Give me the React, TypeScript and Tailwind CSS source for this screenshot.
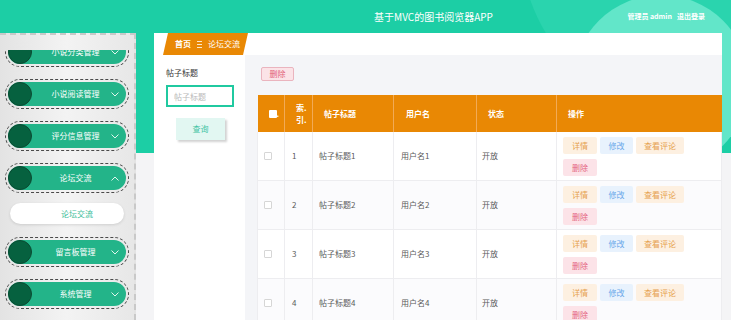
import React from "react";

function Chevron({ up }: { up?: boolean }) {
  return (
    <svg width="8" height="5" viewBox="0 0 8 5" className="shrink-0">
      <polyline
        points={up ? "0.5,4.5 4,1 7.5,4.5" : "0.5,0.5 4,4 7.5,0.5"}
        fill="none"
        stroke="#dff5ec"
        strokeWidth="1"
      />
    </svg>
  );
}

function MenuItem({ label, open, className }: { label: string; open?: boolean; className?: string }) {
  return (
    <div className={"mx-[5px] shrink-0 rounded-full border border-dashed border-[#4a4a4a] p-[2px] " + (className || "")}>
      <div className="flex h-[24px] items-center rounded-full bg-[#23b489] pr-[7px]">
        <div className="h-[24px] w-[24px] shrink-0 rounded-full border border-[#0b4a32] bg-[#06613f]" />
        <span className="flex-1 pl-[8px] text-center text-[8px] leading-none text-white">{label}</span>
        <Chevron up={open} />
      </div>
    </div>
  );
}

function Crumb() {
  return (
    <div className="flex h-[22px] items-center bg-white">
      <div className="ml-[9px] flex h-[22px] w-[85px] items-center bg-[#e98804] pl-[12px] text-[8px] font-bold text-white [clip-path:polygon(5px_0,100%_0,calc(100%-5px)_100%,0_100%)]">
        <span>首页</span>
        <svg width="5" height="7" viewBox="0 0 5 7" className="mx-[6px]">
          <line x1="0" y1="0.5" x2="5" y2="0.5" stroke="#fff" strokeWidth="0.8" />
          <line x1="0" y1="3.5" x2="5" y2="3.5" stroke="#fff" strokeWidth="0.8" />
          <line x1="0" y1="6.5" x2="5" y2="6.5" stroke="#fff" strokeWidth="0.8" />
        </svg>
        <span className="font-normal">论坛交流</span>
      </div>
    </div>
  );
}

function ActionBtn({ label, tone, w }: { label: string; tone: "o" | "b" | "r"; w: string }) {
  const cls =
    tone === "o"
      ? "bg-[#fdf0e1] text-[#e6a14f]"
      : tone === "b"
      ? "bg-[#e8f2fd] text-[#6aa8ea]"
      : "bg-[#fce3e8] text-[#e4657f]";
  return (
    <div className={"flex h-[17px] items-center justify-center rounded-[2px] text-[8px] " + cls + " " + w}>
      {label}
    </div>
  );
}

export default function App() {
  const rows = [1, 2, 3, 4];
  return (
    <div className="relative h-[320px] w-[731px] overflow-hidden bg-[#f4f4f6] font-['Noto_Sans_CJK_SC','Noto_Sans',sans-serif]">
      {/* teal background band with decorative circles */}
      <div className="absolute left-0 top-0 h-[153px] w-full overflow-hidden bg-[#1ccea5]">
        <div className="absolute left-[520px] top-[-240px] h-[360px] w-[360px] rounded-full bg-[#2ad4ae]" />
        <div className="absolute left-[573px] top-[-5px] h-[176px] w-[176px] rounded-full bg-[#62e6c9]" />
      </div>

      <div className="relative flex h-full flex-col">
        {/* header */}
        <div className="grid h-[33px] shrink-0 grid-cols-[136px_1fr_auto_1fr] items-center">
          <div />
          <div />
          <div className="text-[10px] text-white">基于MVC的图书阅览器APP</div>
          <div className="flex justify-end pr-[26px] text-[7px] font-bold text-white">
            <span>管理员 admin</span>
            <span className="ml-[5px]">退出登录</span>
          </div>
        </div>

        {/* body */}
        <div className="flex min-h-0 flex-1">
          {/* sidebar */}
          <div className="flex h-full w-[136px] shrink-0 flex-col border-r-2 border-t-2 border-dashed border-[#c9c9c9] bg-[linear-gradient(to_right,#e3e3e3,#f3f3f3_50%,#e7e7e7)] pt-[15px]">
            <div className="relative h-[270px] overflow-hidden">
              <div className="-mt-[13px] flex flex-col">
                <MenuItem label="小说分类管理" />
                <MenuItem label="小说阅读管理" className="mt-[12px]" />
                <MenuItem label="评分信息管理" className="mt-[12px]" />
                <MenuItem label="论坛交流" open className="mt-[12px]" />
                <div className="mx-[10px] mt-[10px] flex h-[21px] shrink-0 items-center justify-center rounded-full bg-white pl-[20px] text-[8px] text-[#3bbd98] shadow-[0_1px_3px_rgba(0,0,0,0.12)]">
                  论坛交流
                </div>
                <MenuItem label="留言板管理" className="mt-[13px]" />
                <MenuItem label="系统管理" className="mt-[12px]" />
              </div>
            </div>
          </div>

          {/* card */}
          <div className="ml-[18px] flex w-[568px] shrink-0 flex-col bg-white">
            <Crumb />
            <div className="flex min-h-0 flex-1">
              {/* search panel */}
              <div className="flex w-[91px] shrink-0 flex-col bg-white pl-[12px] pt-[12px]">
                <div className="text-[8px] leading-[12px] text-[#333]">帖子标题</div>
                <input
                  placeholder="帖子标题"
                  className="mt-[6px] h-[22px] w-[68px] border-2 border-[#20c9a0] bg-white pl-[6px] text-[8px] outline-none placeholder:text-[#b9b9b9]"
                />
                <button className="ml-[10px] mt-[11px] flex h-[22px] w-[49px] items-center justify-center bg-[#e2f7f2] text-[8px] text-[#3fc3a2] shadow-[2px_2px_2px_#d2d2d2]">
                  查询
                </button>
              </div>

              {/* list panel */}
              <div className="flex min-w-0 flex-1 flex-col bg-[#f4f5f8] pl-[12px] pr-[1px] pt-[12px]">
                <button className="ml-[4px] flex h-[20px] w-[33px] items-center justify-center rounded-[2px] border border-[#eab4be] bg-[#fbe3e7] text-[8px] text-[#e2617a]">
                  删除
                </button>
                <table className="mt-[14px] w-[464px] table-fixed border-collapse text-[8px]">
                  <colgroup>
                    <col className="w-[27px]" />
                    <col className="w-[28px]" />
                    <col className="w-[81px]" />
                    <col className="w-[83px]" />
                    <col className="w-[80px]" />
                    <col className="w-[165px]" />
                  </colgroup>
                  <thead>
                    <tr className="h-[37px] bg-[#e98804] text-left font-bold text-white">
                      <th className="border-r border-[#f2aa55] pl-[11px]">
                        <span className="flex items-end">
                          <span className="inline-block h-[8px] w-[8px] rounded-[1px] bg-white" />
                          <span className="leading-none">.</span>
                        </span>
                      </th>
                      <th className="border-r border-[#f2aa55] pl-[11px] leading-[12px]">
                        索.
                        <br />
                        引.
                      </th>
                      <th className="border-r border-[#f2aa55] pl-[11px]">帖子标题</th>
                      <th className="border-r border-[#f2aa55] pl-[12px]">用户名</th>
                      <th className="border-r border-[#f2aa55] pl-[11px]">状态</th>
                      <th className="pl-[11px]">操作</th>
                    </tr>
                  </thead>
                  <tbody className="text-[#5a5a5a]">
                    {rows.map((n) => (
                      <tr key={n} className={n % 2 === 0 ? "bg-[#fbfbfd]" : "bg-white"}>
                        <td className="border-b border-l border-r border-[#ededf0] pl-[6px]">
                          <span className="block h-[8px] w-[8px] rounded-[1px] border border-[#d6d6d6] bg-white" />
                        </td>
                        <td className="border-b border-r border-[#ededf0] pl-[7px]">{n}</td>
                        <td className="border-b border-r border-[#ededf0] pl-[6px]">帖子标题{n}</td>
                        <td className="border-b border-r border-[#ededf0] pl-[7px]">用户名{n}</td>
                        <td className="border-b border-r border-[#ededf0] pl-[5px]">开放</td>
                        <td className="border-b border-r border-[#ededf0] pb-[4px] pl-[6px] pt-[5px]">
                          <div className="flex gap-[3px]">
                            <ActionBtn label="详情" tone="o" w="w-[34px]" />
                            <ActionBtn label="修改" tone="b" w="w-[33px]" />
                            <ActionBtn label="查看评论" tone="o" w="w-[48px]" />
                          </div>
                          <div className="mt-[5px] flex">
                            <ActionBtn label="删除" tone="r" w="w-[34px]" />
                          </div>
                        </td>
                      </tr>
                    ))}
                  </tbody>
                </table>
              </div>
            </div>
          </div>
        </div>
      </div>
    </div>
  );
}
